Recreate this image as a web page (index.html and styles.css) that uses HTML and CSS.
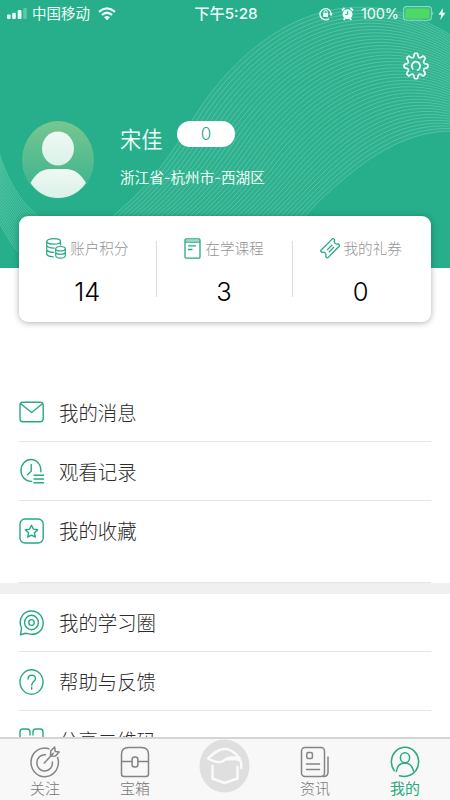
FILE: index.html
```html
<!DOCTYPE html>
<html lang="zh-CN">
<head>
<meta charset="utf-8">
<title>我的</title>
<link rel="stylesheet" href="styles.css">
</head>
<body>
<div class="app">
  <header class="hero">
    <svg class="waves" id="waves" viewBox="0 0 450 268" aria-hidden="true"></svg>
    <div class="status">
      <div class="status-left">
        <svg width="20" height="11" viewBox="0 0 20 11" fill="#e9fff7"><rect x="0" y="6.5" width="3.6" height="4.5" rx="1"/><rect x="5.2" y="4.7" width="3.6" height="6.3" rx="1"/><rect x="10.7" y="2" width="3.8" height="9" rx="1"/><rect x="16.2" y="0" width="3.6" height="11" rx="1" opacity=".3"/></svg>
        <span class="carrier">中国移动</span>
        <svg class="wifi" width="18" height="14" viewBox="0 0 18 14" fill="none" stroke="#e9fff7" stroke-width="2.3"><path d="M1 4.8Q9-2 17 4.8M3.9 8Q9 3.6 14.1 8"/><path d="M9 13.3 6 10.3Q9 7.8 12 10.3Z" fill="#e9fff7" stroke="none"/></svg>
      </div>
      <div class="clock">下午5:28</div>
      <div class="status-right">
        <svg width="14" height="14" viewBox="0 0 14 14" fill="none" stroke="#e9fff7" stroke-width="1.4"><path d="M10 11.7A5.6 5.6 0 1 1 12.2 7"/><path d="M10.2 6.6h3.8l-1.9 2.6z" fill="#e9fff7" stroke="none"/><rect x="4.2" y="6" width="4.8" height="4" fill="#e9fff7" stroke="none"/><path d="M5.1 6V4.8a1.5 1.5 0 0 1 3 0V6" stroke-width="1"/></svg>
        <svg class="alarm" width="13" height="14" viewBox="0 0 13 14"><circle cx="6.5" cy="7.2" r="5" fill="#e9fff7"/><path d="M1 3.5 3.5 1M12 3.5 9.500 1M2.800 13l1.300-2M10.200 13l-1.300-2" stroke="#e9fff7" stroke-width="1.800" fill="none"/><path d="M6.700 4.300v3.200H4.300" stroke="#27ae8b" fill="none"/></svg>
        <span class="percent">100%</span>
        <svg width="31" height="15" viewBox="0 0 31 15"><rect x=".6" y=".6" width="27.800" height="13.600" rx="3" fill="none" stroke="#8cd9c2" stroke-width="1.100"/><rect x="2.200" y="2.200" width="24.600" height="10.500" rx="1.500" fill="#4cd964"/><path d="M29.300 5.200q2 2.200 0 4.400z" fill="#8cd9c2"/></svg>
        <svg class="bolt" width="8" height="12" viewBox="0 0 8 12"><path d="M5 0 .5 6.700h2.700L2.300 12 7.500 4.700H4.600z" fill="#e9fff7"/></svg>
      </div>
    </div>
    <div class="toolbar">
      <svg width="26" height="28" viewBox="0 0 26 28" fill="none" stroke="#effff9" stroke-width="1.700" stroke-linejoin="round"><path id="gear"/><path d="M10.200 17.400A4.200 4.400 0 1 1 13.800 18.400"/></svg>
    </div>
    <div class="profile">
      <svg width="72" height="78" viewBox="0 0 72 78">
        <defs>
          <linearGradient id="bg" x2="0" y2="1"><stop stop-color="#78c690"/><stop offset="1" stop-color="#34b28d"/></linearGradient>
          <linearGradient id="fg" x2="0" y2="1"><stop stop-color="#eff9f2"/><stop offset="1" stop-color="#d9f1e9"/></linearGradient>
        </defs>
        <ellipse cx="36" cy="39" rx="36" ry="39" fill="url(#bg)"/>
        <ellipse cx="36" cy="27.500" rx="16" ry="17" fill="url(#fg)"/>
        <path d="M8.500 62Q16 48 28 48h16q12 0 20 14Q53 77 36 77T8.500 62z" fill="url(#fg)"/>
      </svg>
      <div class="who">
        <div class="name-line"><h1>宋佳</h1><span class="badge">0</span></div>
        <p class="region">浙江省-杭州市-西湖区</p>
      </div>
    </div>
  </header>

  <section class="stats">
    <div class="stat">
      <div class="stat-label">
        <svg width="20" height="21" viewBox="0 0 20 21" fill="none" stroke="#27a982" stroke-width="1.200"><ellipse cx="7.600" cy="3.400" rx="6.900" ry="2.700"/><path d="M.7 3.400v12.900q1.500 2.300 7 2.500M14.500 3.400v4M.7 7.700q2 2.600 7.800 2.400M.7 12q2 2.400 7.500 2.500"/><ellipse cx="14.500" cy="10.700" rx="4.800" ry="2.200"/><path d="M9.700 10.700v7.200c1 3 8.600 3 9.600 0v-7.200M9.700 14.300c1 2.800 8.600 2.800 9.600 0"/></svg>
        <span>账户积分</span>
      </div>
      <b>14</b>
    </div>
    <div class="stat">
      <div class="stat-label">
        <svg width="17" height="21" viewBox="0 0 17 21" fill="none" stroke="#27a982" stroke-width="1.300"><path d="M1 4.200V2q0-1.200 1.200-1.200h12.600Q16 .8 16 2v17q0 1.200-1.200 1.200H2.200Q1 20.200 1 19zM1 4.200h15M4 7.800h8M4 11.500h4.500"/><path d="M1 2.500h15" stroke-opacity=".45"/></svg>
        <span>在学课程</span>
      </div>
      <b>3</b>
    </div>
    <div class="stat">
      <div class="stat-label">
        <svg width="20" height="21" viewBox="0 0 20 21" fill="none" stroke="#27a982" stroke-width="1.300" stroke-linejoin="round"><path d="M12.400.9 1 12.200q-.6.700 0 1.300l1 1q2-.8 3.300.6t.3 3.200l1 1.300q.7.700 1.400 0L19.200 8.200q.6-.7 0-1.400l-1-1q-2 .7-3.300-.7t-.2-3.200l-.9-1q-.7-.7-1.400 0zM7 12.100l5.300-5.300M8.800 14.200l5.200-5.300"/></svg>
        <span>我的礼券</span>
      </div>
      <b>0</b>
    </div>
  </section>

  <main class="menu">
    <ul class="group">
      <li>
        <svg width="26" height="28" viewBox="0 0 26 28"><rect x="1" y="4.300" width="23.200" height="19.400" rx="3"/><path d="m2 6 10.600 8.500L23.200 6"/></svg>
        <span>我的消息</span>
      </li>
      <li>
        <svg width="26" height="28" viewBox="0 0 26 28"><path d="M12.800 24.400C6.500 24.800 2 19.500 2 13.500 2 7.400 6.500 2.500 12 2.500c6 0 10.400 5.600 9.800 12.300M12.200 7.500v6.800l-3.700 3.500M15 18.200h9.500M15 22h9.500M15 25.800h9.500"/></svg>
        <span>观看记录</span>
      </li>
      <li>
        <svg width="26" height="28" viewBox="0 0 26 28"><rect x="1" y="2" width="23.200" height="24" rx="5"/><path d="m12.500 8.200 1.900 3.900 4.300.6-3.200 3.100.8 4.300-3.800-2-3.800 2 .8-4.300-3.200-3.100 4.300-.6z"/></svg>
        <span>我的收藏</span>
      </li>
    </ul>
    <ul class="group">
      <li>
        <svg width="26" height="28" viewBox="0 0 26 28"><path d="M1.500 25.700 2.600 19C-1.500 10.500 4 2 12.500 2c6.600 0 11.700 5.300 11.700 12S19.100 25.300 13 25.300c-3 0-5-1-6.400-1z"/><ellipse cx="12.500" cy="13.500" rx="6.900" ry="7.200"/><ellipse cx="12.500" cy="13.500" rx="2.700" ry="2.900"/></svg>
        <span>我的学习圈</span>
      </li>
      <li>
        <svg width="26" height="28" viewBox="0 0 26 28"><ellipse cx="12.500" cy="14" rx="11.500" ry="12.200"/><path d="M9 11c0-5 7.500-5 7.500-.5 0 3-3.800 3.300-3.800 6.800M12.700 19.300v1.900"/></svg>
        <span>帮助与反馈</span>
      </li>
      <li>
        <svg width="26" height="28" viewBox="0 0 26 28"><path d="M8 11H1V5q0-3 3-3h4q3 0 3 3v3M17 11h7V5q0-3-3-3h-4q-3 0-3 3v3M1 16h10v10H1zM14 16h10v10H14z"/></svg>
        <span>分享二维码</span>
      </li>
    </ul>
  </main>

  <nav class="tabs">
    <a class="tab">
      <svg width="30" height="32" viewBox="0 0 30 32"><path d="M18.800 2.700A13.700 14.300 0 1 0 27.600 11.500M15.500 8.700A7.800 8.200 0 1 0 22.400 16M14.300 17l9-9.700M20.500 10.200l.3-5.400L24.700 1l.5 4.500 4 .5-3.700 4z"/></svg>
      <span>关注</span>
    </a>
    <a class="tab">
      <svg width="30" height="32" viewBox="0 0 30 32"><path d="M1.500 28V8.500q0-7 7-7h13q7 0 7 7V28q0 2.500-2.500 2.500H4Q1.500 30.500 1.500 28zM1.500 15.500h10.600M17.900 15.500h10.600"/><rect x="12.100" y="11" width="5.800" height="10" rx="2.500"/></svg>
      <span>宝箱</span>
    </a>
    <a class="tab-main">
      <svg width="52" height="54" viewBox="0 0 52 54"><ellipse cx="25.500" cy="27" rx="25" ry="26.500" fill="#dfdfdf"/><path d="M9 19.500C14 15 19 10 25.500 10S37 14.500 41 19.500c-6-1.500-12-1.500-16.500 2.200-4 3-9.500 1.200-15.500-2.200zM28 20.600c7-1.300 14-.3 14.200 2.900V29M13.500 27v12.500L25.500 44l13-4.500V28" fill="none" stroke="#fafafa" stroke-width="2.500" stroke-linejoin="round" stroke-linecap="round"/></svg>
    </a>
    <a class="tab">
      <svg width="30" height="32" viewBox="0 0 30 32"><rect x="1.500" y="1.500" width="23" height="29" rx="3.500"/><path d="M28 11v15q0 4.500-4.500 4.500M6.500 18h13M6.500 23.500h13"/><rect x="6.800" y="6.500" width="5.600" height="6" rx="1.500"/></svg>
      <span>资讯</span>
    </a>
    <a class="tab active">
      <svg width="30" height="32" viewBox="0 0 30 32"><path d="M4.200 24.800A13.600 14.600 0 1 1 25.800 24.800Q19 32.500 9.500 29.700"/><ellipse cx="15" cy="11.800" rx="4.600" ry="5"/><path d="M6.300 25.500q1.200-8.500 8.700-8.500 6.500 0 8.500 8"/></svg>
      <span>我的</span>
    </a>
  </nav>
</div>
<script src="main.js"></script>
</body>
</html>
```
FILE: styles.css
```css
* { box-sizing: border-box; margin: 0; padding: 0; }
body {
  width: 450px;
  height: 800px;
  overflow: hidden;
  background: #fff;
  font-family: "Inter", "Noto Sans CJK SC", sans-serif;
  color: #2c2c2c;
}
.app { height: 800px; display: flex; flex-direction: column; overflow: hidden; }
svg { display: block; flex: none; }

.hero {
  position: relative;
  flex: none;
  height: 268px;
  background: #27ae8b;
  color: #effff9;
}
.waves { position: absolute; left: 0; top: 0; width: 450px; height: 268px; }
.waves path { fill: none; stroke: #6fd3b3; stroke-width: 1; stroke-opacity: .55; }
.waves .band { fill: #4fc0a0; fill-opacity: .22; stroke: none; }

.status {
  position: relative;
  height: 27px;
  display: grid;
  grid-template-columns: 1fr auto 1fr;
  align-items: center;
  padding: 0 4px 0 7px;
  font-size: 14.5px;
  line-height: 27px;
}
.status-left, .status-right { display: flex; align-items: center; }
.status-right { justify-content: flex-end; }
.carrier { margin-left: 5px; }
.wifi { margin-left: 8px; }
.clock { font-size: 15.2px; font-weight: 450; margin-right: 1px; }
.alarm { margin-left: 8px; }
.percent { margin: 0 4px 0 7px; letter-spacing: -.1px; }
.bolt { margin-left: 4px; }

.toolbar { position: relative; display: flex; justify-content: flex-end; padding: 25px 21px 0 0; }

.profile { position: relative; display: flex; padding: 41px 0 0 22px; }
.who { margin-left: 26px; }
.name-line { display: flex; height: 33px; }
h1 { font-size: 21.3px; font-weight: 350; line-height: 36px; transform: scaleY(1.06); width: 57px; }
.badge {
  width: 58px;
  height: 26px;
  border-radius: 13px;
  background: #fff;
  color: #27a982;
  font-size: 17px;
  font-weight: 300;
  line-height: 27px;
  text-align: center;
}
.region { font-size: 14.6px; line-height: 24px; margin-top: 12px; white-space: nowrap; }

.stats {
  position: relative;
  flex: none;
  display: grid;
  grid-template-columns: repeat(3, 136.7px);
  height: 106px;
  margin: -52px 19px 0;
  padding: 20px 0;
  background: #fff;
  border-radius: 9px;
  box-shadow: 0 1px 6px rgba(0, 0, 0, .3);
}
.stat { display: flex; flex-direction: column; align-items: center; margin-bottom: -10px; }
.stat + .stat { background: linear-gradient(#ddd, #ddd) 0 5px / 1px 56px no-repeat; }
.stat-label { display: flex; align-items: center; gap: 4px; height: 24px; color: #949494; font-size: 14.6px; font-weight: 300; }
.stat-label span { transform: translateY(-1px); }
.stat b { font-size: 25.5px; line-height: 30px; margin-top: 17px; font-weight: 300; color: #000; transform: scaleY(1.02); }

.menu { flex: 1; min-height: 0; overflow: hidden; padding-top: 61px; }
.group { list-style: none; }
.group li {
  display: flex;
  align-items: center;
  gap: 14px;
  height: 58.8px;
  margin: 0 19px;
  padding-top: 1px;
  border-bottom: 1px solid #e5e5e5;
  font-size: 19.4px;
  font-weight: 300;
}
.group li span { transform: scaleY(1.04); }
.group li svg, .tab svg { fill: none; stroke: #27a982; stroke-width: 1.4; stroke-linejoin: round; stroke-linecap: round; }
.group:first-child li:last-child { height: 82px; padding-bottom: 22px; }
.group + .group { border-top: 11px solid #f0f0f0; }

.tabs {
  flex: none;
  height: 63px;
  display: grid;
  grid-template-columns: repeat(5, 1fr);
  background: #f8f8f8;
  border-top: 2px solid #d5d5d5;
}
.tab, .tab-main { display: flex; flex-direction: column; align-items: center; }
.tab { padding-top: 7px; color: #777; font-size: 15px; font-weight: 300; line-height: 21px; }
.tab svg { stroke: #848484; stroke-width: 1.5; }
.tab.active { color: #27a982; font-weight: 400; }
.tab.active svg { stroke: #27a982; }
```
FILE: main.js
```js
const NS = 'http://www.w3.org/2000/svg';
const waves = document.getElementById('waves');

function addPath(d, cls) {
  const p = document.createElementNS(NS, 'path');
  p.setAttribute('d', d);
  if (cls) p.setAttribute('class', cls);
  waves.appendChild(p);
}

// Each curve is a list of control points: start, then two cubic segments.
function toPath(c) {
  return `M${c[0]} ${c[1]}C${c.slice(2, 8).join(' ')} ${c.slice(8).join(' ')}`;
}

function blend(a, b, count) {
  for (let i = 0; i <= count; i++) {
    addPath(toPath(a.map((v, k) => +(v + (b[k] - v) * i / count).toFixed(2))));
  }
}

const outer = [113, 216, 147, 188, 168, 160, 193, 119, 238, 45, 335, -38, 452, 36];
const inner = [305, 216, 316, 204, 326, 194, 339, 183, 375, 152, 410, 131, 452, 131];
addPath('M113 216C147 188 168 160 193 119C238 45 335 -38 452 36V131C410 131 375 152 339 183C326 194 316 204 305 216Z', 'band');
blend(outer, inner, 40);

const left = [-1, 152, 6, 176, 16, 193, 28, 207, 36, 214, 42, 220, 52, 228];
const leftEnd = [-1, 222, 3, 230, 7, 236, 10, 241, 13, 246, 17, 251, 24, 257];
blend(left, leftEnd, 20);

// Eight-toothed gear outline.
const pts = [];
for (let i = 0; i < 96; i++) {
  const t = i / 96 * Math.PI * 2;
  const w = Math.max(-1, Math.min(1, Math.cos(8 * t) * 1.7));
  const r = 10.2 + 1.7 * w;
  pts.push(`${(13 + r * Math.sin(t)).toFixed(2)} ${(14 - r * 1.07 * Math.cos(t)).toFixed(2)}`);
}
document.getElementById('gear').setAttribute('d', `M${pts.join('L')}Z`);
```
